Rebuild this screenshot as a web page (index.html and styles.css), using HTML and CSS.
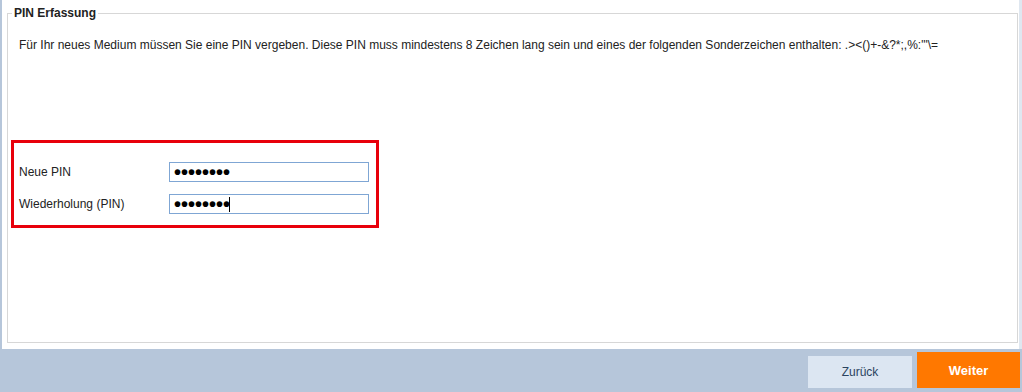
FILE: index.html
```html
<!DOCTYPE html>
<html lang="de">
<head>
<meta charset="utf-8">
<title>PIN Erfassung</title>
<link rel="stylesheet" href="styles.css">
</head>
<body>
<div class="page">
  <div class="panel">
    <fieldset class="box">
      <legend class="legend">PIN Erfassung</legend>
      <p class="desc">Für Ihr neues Medium müssen Sie eine PIN vergeben. Diese PIN muss mindestens 8 Zeichen lang sein und eines der folgenden Sonderzeichen enthalten: .&gt;&lt;()+-&amp;?*;,%:"'\=</p>
      <div class="pinbox">
        <label class="label" for="pin1">Neue PIN</label>
        <input class="field" id="pin1" type="password" value="abcdefgh">
        <label class="label" for="pin2">Wiederholung (PIN)</label>
        <div class="fieldwrap">
          <input class="field" id="pin2" type="password" value="abcdefgh">
          <span class="caret"></span>
        </div>
      </div>
    </fieldset>
  </div>
  <div class="footer">
    <button class="btn btn-back" type="button">Zurück</button>
    <button class="btn btn-next" type="button">Weiter</button>
  </div>
</div>
</body>
</html>
```
FILE: styles.css
```css
html, body {
  margin: 0;
  padding: 0;
}
body {
  background: #b6c6da;
  font-family: "Liberation Sans", Arial, sans-serif;
  font-size: 12px;
  color: #222;
  width: 1022px;
  height: 392px;
  overflow: hidden;
}
.page {
  display: flex;
  flex-direction: column;
  height: 392px;
  background: linear-gradient(to right, #b6c6da 0, #b6c6da 2px, transparent 2px), #dfe7f0;
}
.panel {
  background: #fff;
  margin-left: 2px;
  width: 1017px;
  height: 349px;
  box-sizing: border-box;
  padding: 6px 1px 6px 5px;
  display: flex;
}
.box {
  margin: 0;
  padding: 0 0 0 4px;
  border: 1px solid #d7d7d7;
  flex: 1;
  min-width: 0;
}
.legend {
  font-weight: bold;
  font-size: 12px;
  line-height: 14px;
  padding: 0 2px;
  color: #222;
}
.desc {
  margin: 18px 0 0 7px;
  line-height: 14px;
}
.pinbox {
  margin: 88px 0 0 -1px;
  width: 368px;
  height: 88px;
  box-sizing: border-box;
  border: 3px solid #e8000b;
  padding: 19px 7px 12px 5px;
  display: grid;
  grid-template-columns: 150px 200px;
  grid-auto-rows: 20px;
  row-gap: 12px;
  align-items: center;
}
.label {
  color: #222;
  font-size: 12px;
}
.fieldwrap {
  position: relative;
  height: 20px;
}
.field {
  display: block;
  box-sizing: border-box;
  width: 200px;
  height: 20px;
  margin: 0;
  padding: 0 4px;
  border: 1px solid #7fa6d4;
  background: #fff;
  font-family: "Liberation Sans", Arial, sans-serif;
  font-weight: bold;
  font-size: 20px;
  line-height: 18px;
  color: #000;
  outline: none;
}
.caret {
  position: absolute;
  left: 60px;
  top: 3px;
  width: 1px;
  height: 15px;
  background: #000;
}
.footer {
  flex: 1;
  background: #b6c6da;
  display: flex;
  justify-content: flex-end;
  align-items: flex-end;
  gap: 5px;
  padding: 0 2px 4px 0;
}
.btn {
  border: 0;
  margin: 0;
  font-family: "Liberation Sans", Arial, sans-serif;
  cursor: pointer;
}
.btn-back {
  width: 104px;
  height: 32px;
  background: #dce6f2;
  color: #2b4460;
  font-size: 12px;
}
.btn-next {
  width: 103px;
  height: 36px;
  background: #ff7800;
  color: #fff;
  font-weight: bold;
  font-size: 13px;
}
```
